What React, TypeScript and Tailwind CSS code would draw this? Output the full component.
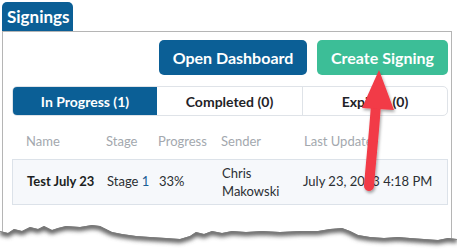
import React from 'react';

const font = { fontFamily: 'Lato, "Open Sans", sans-serif' };

const tear =
  '0,231 8,233 14,229 22,231 30,227 38,229 44,226 52,230 58,228 66,226 80,227 92,225 100,226 106,229 112,232 122,234 136,236 150,237 166,238 180,239 190,236 196,232 204,234 212,231 222,233 232,231 246,232 262,231 280,232 300,231 318,231 330,229 342,228 350,231 358,235 370,237 384,238 398,237 410,238 424,239 438,240 448,238 457,239';

function TornEdge() {
  // jagged tear along the bottom of the capture, shadow falls below it
  return (
    <svg className="absolute left-0 top-0" width="457" height="251" viewBox="0 0 457 251">
      <defs>
        <clipPath id="below">
          <polygon points={`${tear} 457,251 0,251`} />
        </clipPath>
        <filter id="tearBlur" x="-5%" y="-100%" width="110%" height="300%">
          <feGaussianBlur stdDeviation="2.2" />
        </filter>
      </defs>
      <polygon points={`${tear} 457,251 0,251`} fill="#ffffff" />
      <g clipPath="url(#below)">
        <polyline points={tear} fill="none" stroke="#5f5f5f" strokeWidth="6" filter="url(#tearBlur)" transform="translate(0,1)" />
        <polyline points={tear} fill="none" stroke="#7a7a7a" strokeWidth="1.5" />
      </g>
    </svg>
  );
}

function Arrow() {
  return (
    <svg className="absolute left-0 top-0" width="457" height="251" viewBox="0 0 457 251">
      <defs>
        <filter id="arrowShadow" x="-50%" y="-20%" width="200%" height="140%">
          <feDropShadow dx="1" dy="2" stdDeviation="1.5" floodColor="#000" floodOpacity="0.35" />
        </filter>
      </defs>
      <g filter="url(#arrowShadow)">
        <path d="M376 104 C374 135 371 160 369 186" stroke="#f23a46" strokeWidth="10" strokeLinecap="round" fill="none" />
        <polygon points="379,70 362,108 394,110" fill="#f23a46" />
      </g>
    </svg>
  );
}

export default function App() {
  return (
    <div className="relative w-[457px] h-[251px] overflow-hidden bg-white" style={font}>
      <div className="pt-[2px] pl-[2px]">
        <div className="flex h-[29px] w-[71px] items-center rounded-t-[5px] bg-[#0b5f96] pl-[5px] text-[17px] font-bold text-white">
          Signings
        </div>
        <div className="w-[450px] h-[230px] border border-b-0 border-[#b5b5b5] pl-[9px] pr-[3px] pt-[8px]">
          <div className="flex justify-end gap-[10px]">
            <button className="flex h-[35px] w-[148px] items-center justify-center rounded-[5px] bg-[#0b5f96] text-[16px] font-bold text-white">
              Open Dashboard
            </button>
            <button className="flex h-[35px] w-[131px] items-center justify-center rounded-[5px] bg-[#3cbe97] text-[16px] font-bold text-white">
              Create Signing
            </button>
          </div>
          <div className="mt-[11px] flex h-[30px] overflow-hidden rounded-[5px] border border-[#dfe3e8] text-[14px] font-bold text-[#1f2328]">
            <div className="flex w-[144px] items-center justify-center bg-[#0b5f96] text-white">In Progress (1)</div>
            <div className="flex w-[146px] items-center justify-center border-r border-[#dfe3e8]">Completed (0)</div>
            <div className="flex flex-1 items-center justify-center">Expired (0)</div>
          </div>
          <div className="mt-[16px] grid grid-cols-[80px_52px_63px_83px_1fr] pl-[14px] text-[13px] text-[#a3a8ae]">
            <div>Name</div>
            <div>Stage</div>
            <div>Progress</div>
            <div>Sender</div>
            <div>Last Update</div>
          </div>
          <div className="mt-[7px] grid h-[46px] w-[436px] grid-cols-[80px_52px_63px_81px_1fr] items-center border border-[#dce2e9] bg-[#f6f8fb] pl-[14px] text-[13px] text-[#2b2f33]">
            <div className="font-bold text-[#1c1f22]">Test July 23</div>
            <div>
              Stage <span className="text-[#1a5e94]">1</span>
            </div>
            <div>33%</div>
            <div className="leading-[18px]">
              Chris
              <br />
              Makowski
            </div>
            <div>July 23, 2023 4:18 PM</div>
          </div>
        </div>
      </div>
      <TornEdge />
      <Arrow />
    </div>
  );
}
